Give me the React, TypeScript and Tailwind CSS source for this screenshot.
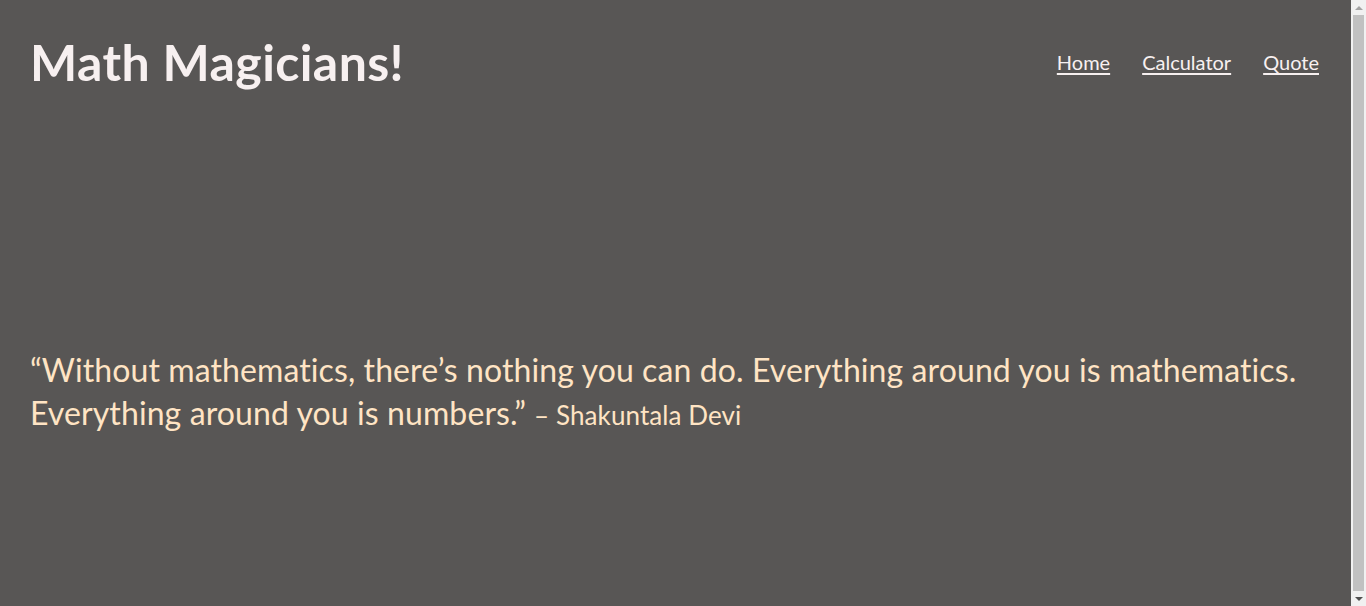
const links = ["Home", "Calculator", "Quote"];

export default function App() {
  return (
    <div className="flex bg-[#585655] font-['Segoe_UI','Lato',sans-serif]">
      <div className="min-h-[620px] flex-1">
        <header className="flex items-center justify-between pl-[30px] pr-8 pt-[30px]">
          <h1 className="text-[50px] font-bold leading-[64px] tracking-[0.4px] text-[#f7f0f0]">Math Magicians!</h1>
          <nav>
            <ul className="flex gap-8 text-[20px] text-[#f7f0f0]">
              {links.map((l) => (
                <li key={l}>
                  <a href="#" className="underline underline-offset-[3px]">
                    {l}
                  </a>
                </li>
              ))}
            </ul>
          </nav>
        </header>

        <main className="pl-[30px] pr-8 pt-[254px] pb-[185px]">
          <p className="text-[32px] leading-[43px] tracking-[0.1px] text-[#ffe4c4]">
            “Without mathematics, there’s nothing you can do. Everything around you is mathematics. Everything around you
            is numbers.” <span className="text-[26px]">– Shakuntala Devi</span>
          </p>
        </main>
      </div>

      {/* fake scrollbar, the reference was taken with one */}
      <div className="sticky top-0 flex h-[606px] w-[15px] flex-col bg-[#f1f1f1]">
        <div className="flex h-[15px] items-center justify-center">
          <div className="h-0 w-0 border-x-[4px] border-b-[4px] border-x-transparent border-b-[#a3a3a3]" />
        </div>
        <div className="mx-[2px] flex-1 bg-[#c1c1c1]" />
        <div className="flex h-[15px] items-center justify-center">
          <div className="h-0 w-0 border-x-[4px] border-t-[4px] border-x-transparent border-t-[#505050]" />
        </div>
      </div>
    </div>
  );
}
